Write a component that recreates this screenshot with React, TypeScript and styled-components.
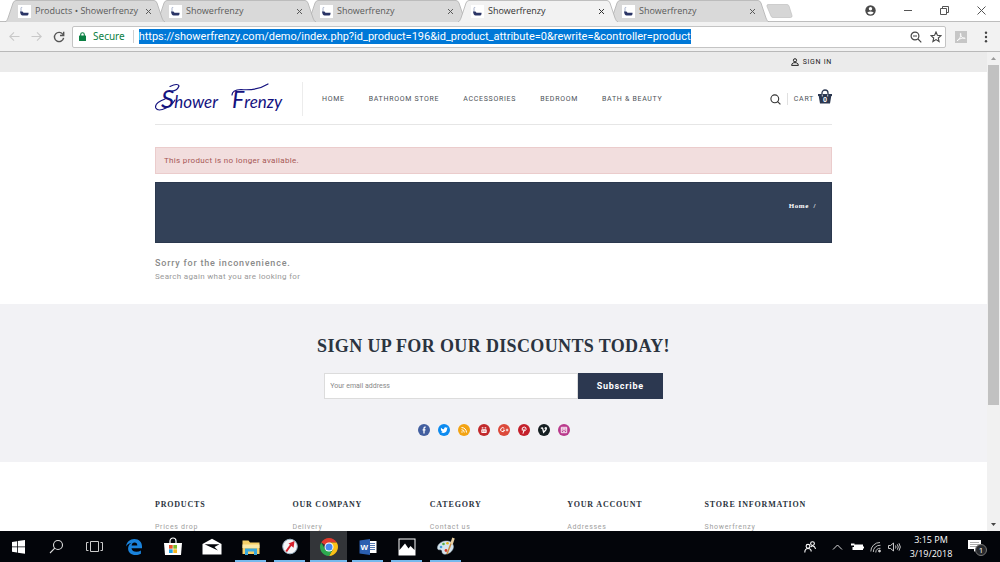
import React from "react";
import styled, { createGlobalStyle, css } from "styled-components";

const ui = `"Open Sans", "Noto Sans", sans-serif`;
const wideUi = `"Noto Sans", "Open Sans", sans-serif`;
const sans = `Roboto, "Liberation Sans", sans-serif`;
const serif = `"Liberation Serif", "Times New Roman", serif`;
const navy = "#2c3850";

const GlobalStyle = createGlobalStyle`
  *, *::before, *::after { box-sizing: border-box; }
  body { margin: 0; background: #fff; font-family: ${sans}; }
  h1, h2, h3, p, ul { margin: 0; padding: 0; }
  ul { list-style: none; }
  a { color: inherit; text-decoration: none; }
  button { border: 0; padding: 0; background: none; color: inherit; font: inherit; }
  svg { display: block; flex: none; }
`;

const Screen = styled.div`
  display: flex;
  flex-direction: column;
  height: 100vh;
  overflow: hidden;
`;

/* ---------- browser window ---------- */

const TabStrip = styled.div`
  display: flex;
  align-items: flex-end;
  height: 22px;
  flex: none;
  padding-left: 5px;
  background: #fff;
  border-bottom: 1px solid #bdbdbd;
`;

const TabList = styled.div`
  display: flex;
  flex: none;
`;

const Tab = styled.div<{ $active?: boolean; $order: number }>`
  position: relative;
  z-index: ${(p) => (p.$active ? 9 : p.$order)};
  display: flex;
  align-items: center;
  width: 151px;
  height: 22px;
  margin-bottom: -1px;
  padding: 0 4px 0 13px;
  color: ${(p) => (p.$active ? "#333" : "#5a5a5a")};
  font: 9px/22px ${ui};
`;

const TabShape = styled.svg`
  position: absolute;
  left: 0;
  top: 0;
  z-index: -1;
`;

const TabTitle = styled.span`
  flex: 1;
  margin-left: 4px;
  white-space: nowrap;
`;

const IconButton = styled.button`
  display: flex;
  align-items: center;
  justify-content: center;
  flex: none;
`;

const NewTab = styled(IconButton)`
  height: 20px;
  margin-left: 6px;
`;

const WindowControls = styled.div`
  display: flex;
  align-items: center;
  gap: 28px;
  height: 21px;
  margin-left: auto;
  padding-right: 14px;
  color: #555;
`;

const Toolbar = styled.div`
  display: flex;
  align-items: center;
  flex: none;
  height: 30px;
  padding: 0 12px 0 9px;
  background: #f2f2f2;
  border-bottom: 1px solid #b9b9b9;
`;

const NavButtons = styled.div`
  display: flex;
  gap: 11px;
  margin-right: 7px;
  color: #c9c9c9;
`;

const AddressBar = styled.div`
  display: flex;
  align-items: center;
  flex: 1;
  min-width: 0;
  height: 22px;
  padding: 0 3px 0 6px;
  background: #fff;
  border: 1px solid #c4c4c4;
  border-radius: 2px;
  font: 10px/15px ${wideUi};
`;

const Secure = styled.span`
  margin-left: 7px;
  padding-right: 8px;
  border-right: 1px solid #d0d0d0;
  color: #0b8043;
  line-height: 13px;
`;

const Url = styled.span`
  margin-left: 5px;
  background: #0078d7;
  color: #fff;
  font: 11px/15px ${sans};
  white-space: nowrap;
`;

const AddressActions = styled.div`
  display: flex;
  gap: 8px;
  margin-left: auto;
  color: #444;
`;

const Extensions = styled.div`
  display: flex;
  align-items: center;
  gap: 17px;
  margin-left: 9px;
`;

/* ---------- page ---------- */

const Viewport = styled.div`
  display: flex;
  flex: 1;
  min-height: 0;
  overflow: hidden;
`;

const Page = styled.div`
  flex: 1;
  min-width: 0;
  overflow: hidden;
`;

const ScrollTrack = styled.div`
  display: flex;
  flex-direction: column;
  align-items: center;
  width: 13px;
  flex: none;
  background: #f1f1f1;
`;

const ScrollThumb = styled.div`
  width: 11px;
  height: 71%;
  margin-bottom: auto;
  background: #c1c1c1;
`;

const Container = styled.div`
  max-width: 677px;
  margin: 0 auto;
`;

const TopBar = styled.div`
  background: #ebebeb;
`;

const TopBarInner = styled(Container)`
  display: flex;
  justify-content: flex-end;
  align-items: center;
  height: 20px;
`;

const SignIn = styled.a`
  display: flex;
  align-items: center;
  gap: 4px;
  color: #222;
  font-size: 7px;
  line-height: 18px;
  letter-spacing: 0.1em;
`;

const Header = styled(Container).attrs({ as: "header" })`
  display: flex;
  align-items: center;
  height: 53px;
  padding-top: 2px;
  border-bottom: 1px solid #e6e6e6;
`;

const Logo = styled.a`
  display: flex;
  align-items: center;
  width: 148px;
  height: 34px;
  border-right: 1px solid #ececec;
`;

const MainNav = styled.nav`
  display: flex;
  gap: 24px;
  margin-left: 19px;
  color: #4c5157;
  font-size: 7px;
  line-height: 12px;
  letter-spacing: 0.1em;
  white-space: nowrap;
`;

const HeaderTools = styled.div`
  display: flex;
  align-items: center;
  margin-left: auto;
  color: #4c5157;
  font-size: 7px;
  line-height: 12px;
  letter-spacing: 0.1em;
`;

const Cart = styled.a`
  display: flex;
  align-items: center;
  gap: 4px;
  margin-left: 6px;
  padding-left: 6px;
  border-left: 1px solid #e0e0e0;
`;

const Basket = styled.span`
  position: relative;
  display: block;
  margin-top: -5px;
`;

const BasketCount = styled.span`
  position: absolute;
  left: 0;
  right: 0;
  bottom: 0;
  color: #fff;
  font-size: 7px;
  font-weight: 700;
  line-height: 8px;
  letter-spacing: 0;
  text-align: center;
`;

const Alert = styled.div`
  margin-top: 22px;
  padding: 6px 8px;
  background: #f2dede;
  border: 1px solid #ebcccc;
  color: #a65755;
  font-size: 8px;
  line-height: 13px;
  letter-spacing: 0.04em;
`;

const Banner = styled.div`
  display: flex;
  justify-content: flex-end;
  height: 61px;
  margin-top: 8px;
  padding: 18px 15px;
  background: #334158;
  border: 1px solid #2b384e;
  color: #fff;
  font: bold 7px/10px ${serif};
  letter-spacing: 0.08em;
  white-space: pre;
`;

const Message = styled.section`
  padding: 13px 0 21px;
  color: #999;
`;

const MessageTitle = styled.h1`
  color: #8a8a8a;
  font-size: 9px;
  font-weight: 500;
  line-height: 15px;
  letter-spacing: 0.09em;
`;

const MessageText = styled.p`
  font-size: 8px;
  line-height: 12px;
  letter-spacing: 0.04em;
`;

const Newsletter = styled.section`
  padding: 30px 0 26px;
  background: #f2f2f5;
`;

const NewsletterTitle = styled.h2`
  color: #2b3440;
  font: bold 18px/24px ${serif};
  letter-spacing: 0.02em;
  text-align: center;
`;

const Form = styled.form`
  display: flex;
  width: 50%;
  height: 26px;
  margin: 15px auto 25px;
`;

const Email = styled.input`
  flex: 1;
  min-width: 0;
  padding: 0 5px;
  background: #fff;
  border: 1px solid #dcdcdc;
  border-radius: 0;
  color: #333;
  font: 7px/12px ${sans};
  &::placeholder { color: #888; }
`;

const Subscribe = styled.button`
  width: 85px;
  background: ${navy};
  color: #fff;
  font: 700 9px/12px ${sans};
  letter-spacing: 0.08em;
`;

const Socials = styled.ul`
  display: flex;
  justify-content: center;
  gap: 8px;
`;

const Social = styled.a<{ $color: string }>`
  display: flex;
  align-items: center;
  justify-content: center;
  width: 12px;
  height: 12px;
  border-radius: 50%;
  background: ${(p) => p.$color};
`;

const Footer = styled(Container).attrs({ as: "footer" })`
  display: grid;
  grid-template-columns: repeat(5, 1fr);
  gap: 10px;
  padding-top: 37px;
`;

const FooterTitle = styled.h3`
  color: #2b3440;
  font: bold 8px/12px ${serif};
  letter-spacing: 0.1em;
  white-space: nowrap;
`;

const FooterLink = styled.a`
  display: block;
  margin-top: 10px;
  color: #a0a0a0;
  font-size: 7px;
  line-height: 12px;
  letter-spacing: 0.1em;
`;

/* ---------- taskbar ---------- */

const Taskbar = styled.div`
  display: flex;
  flex: none;
  height: 31px;
  background: #03050a;
  color: #fff;
`;

const Apps = styled.div`
  display: flex;
`;

const AppButton = styled.button<{ $state?: "open" | "active" }>`
  display: flex;
  align-items: center;
  justify-content: center;
  width: 39px;
  height: 31px;
  border: solid transparent;
  border-width: 0 ${(p) => (p.$state === "active" ? 1 : 4)}px;
  background-clip: padding-box;
  &:first-child { width: 36px; }
  ${(p) => p.$state && css`
    background-image: linear-gradient(#76b9ed, #76b9ed);
    background-repeat: no-repeat;
    background-size: 100% 2px;
    background-position: 0 100%;
  `}
  ${(p) => p.$state === "active" && css`background-color: #333539;`}
`;

const Tray = styled.div`
  display: flex;
  align-items: center;
  margin-left: auto;
  padding-right: 13px;
  gap: 6px;
`;

const Clock = styled.div`
  width: 48px;
  font: 9px/14px ${ui};
  text-align: center;
  white-space: nowrap;
`;

const Notices = styled.button`
  position: relative;
  margin-left: 7px;
`;

const NoticeCount = styled.span`
  position: absolute;
  left: 7px;
  top: 5px;
  width: 12px;
  height: 12px;
  border: 1px solid #777;
  border-radius: 50%;
  background: #26282c;
  font: 8px/10px ${ui};
  text-align: center;
`;

/* ---------- drawings ---------- */

const Favicon = () => (
  <svg width="13" height="13" viewBox="0 0 13 13">
    <rect width="13" height="13" fill="#fff" />
    <path d="M3 7V3.2Q3 2 4.200 2.500" fill="none" stroke="#a9b4cc" strokeWidth="1" />
    <path d="M2 6.500h2.500l1 1.200h5v1.300q-.2 1.500-1.500 1.500H4.500Q2.500 10.500 2 6.500z" fill="#2b3566" />
  </svg>
);

const Close = () => (
  <svg width="7" height="7" viewBox="0 0 7 7" stroke="currentColor" strokeWidth="1">
    <path d="M1 1l5 5M6 1L1 6" />
  </svg>
);

const Back = ({ flip }: { flip?: boolean }) => (
  <svg width="11" height="11" viewBox="0 0 11 11" fill="none" stroke="currentColor" strokeWidth="1.1">
    <path d={flip ? "M.5 5.5h9.5M6 1.3l4.2 4.2L6 9.7" : "M10.5 5.5H1M5 1.3L.8 5.5 5 9.7"} />
  </svg>
);

const Reload = () => (
  <svg width="12" height="12" viewBox="0 0 12 12" fill="none" stroke="#555" strokeWidth="1.4">
    <path d="M10 3.6A4.6 4.6 0 1 0 10.6 6.8" />
    <path d="M10.7.8v3.7H7" />
  </svg>
);

const Lock = () => (
  <svg width="7" height="9" viewBox="0 0 7 9">
    <rect y="3.5" width="7" height="5.5" rx=".6" fill="#0b8043" />
    <path d="M1.7 4V2.5a1.8 1.8 0 0 1 3.6 0V4" fill="none" stroke="#0b8043" strokeWidth="1.1" />
  </svg>
);

const ZoomOut = () => (
  <svg width="12" height="12" viewBox="0 0 12 12" fill="none" stroke="currentColor" strokeWidth="1.2">
    <circle cx="5" cy="5" r="3.9" />
    <path d="M8 8l3.3 3.3M3 5h4" />
  </svg>
);

const Star = () => (
  <svg width="12" height="12" viewBox="0 0 12 12" fill="none" stroke="currentColor" strokeWidth="1.1">
    <path d="M6 1l1.4 3.3 3.6.3-2.7 2.4.8 3.5L6 8.6l-3.1 1.9.8-3.5L1 4.6l3.6-.3z" />
  </svg>
);

const Pdf = () => (
  <svg width="12" height="12" viewBox="0 0 12 12">
    <rect width="12" height="12" fill="#c6c6c6" />
    <path d="M2 9.8C4.5 8.5 6.4 4.5 5.8 2.4 5 2 5 4 6.6 5.8 8 7.4 9.6 7.8 10.2 7.3 9.8 6.4 5.5 6.9 2 9.8z" fill="none" stroke="#fff" strokeWidth=".9" />
  </svg>
);

const MenuDots = () => (
  <svg width="4" height="12" viewBox="0 0 4 12" fill="#444">
    <circle cx="2" cy="1.7" r="1.2" />
    <circle cx="2" cy="6" r="1.2" />
    <circle cx="2" cy="10.3" r="1.2" />
  </svg>
);

const Profile = () => (
  <svg width="11" height="11" viewBox="0 0 11 11">
    <circle cx="5.5" cy="5.5" r="5.2" fill="#4a4a4a" />
    <circle cx="5.5" cy="3.8" r="1.7" fill="#fff" />
    <path d="M2.3 7.6q3.2-2.2 6.4 0-1.2 1.9-3.2 1.9t-3.2-1.9z" fill="#fff" />
  </svg>
);

const Minimise = () => (
  <svg width="8" height="9" viewBox="0 0 8 9" stroke="currentColor"><path d="M0 4.5h8" /></svg>
);

const Restore = () => (
  <svg width="9" height="9" viewBox="0 0 9 9" fill="none" stroke="currentColor">
    <path d="M.5 2.5h6v6h-6zM2.5 2.5v-2h6v6h-2" />
  </svg>
);

const CloseWindow = () => (
  <svg width="9" height="9" viewBox="0 0 9 9" stroke="currentColor"><path d="M.5.5l8 8M8.5.5l-8 8" /></svg>
);

const User = () => (
  <svg width="8" height="8" viewBox="0 0 8 8" fill="none" stroke="#222" strokeWidth="1">
    <circle cx="4" cy="2.300" r="1.600" />
    <path d="M.6 7.400Q.6 5.300 2.800 4.700h2.400Q7.400 5.300 7.400 7.400z" />
  </svg>
);

const Wordmark = () => (
  <svg width="130" height="34" viewBox="0 0 130 34" role="img" aria-label="Shower Frenzy">
    <g fill="#14127f" fontFamily="Lato, sans-serif" fontStyle="italic" fontSize="17">
      <text x="6" y="26"><tspan fontSize="26">S</tspan>hower</text>
      <text x="77" y="26"><tspan fontSize="23">F</tspan>renzy</text>
    </g>
    <g fill="none" stroke="#14127f" strokeWidth="1.200" strokeLinecap="round">
      <path d="M10 17Q-1 21 .8 26 3 30 11 26 17 23 20 18" />
      <path d="M17 9Q22 9 24 4 23 .8 15 4.500" />
      <path d="M77 13Q77 8 86 7.500 102 9 113 2" />
    </g>
  </svg>
);

const Search = () => (
  <svg width="11" height="11" viewBox="0 0 11 11" fill="none" stroke="#333" strokeWidth="1.100">
    <circle cx="4.800" cy="4.800" r="3.900" />
    <path d="M7.600 7.600l2.800 2.800" />
  </svg>
);

const BasketShape = () => (
  <svg width="14" height="15" viewBox="0 0 14 15">
    <path d="M0 5h14v2h-.7L12 14.500H2L.7 7H0z" fill={navy} />
    <path d="M4 7.500V4a3 3 0 0 1 6 0v3.500" fill="none" stroke={navy} strokeWidth="1.300" />
    <path d="M4.300 5.500v2M9.700 5.500v2" stroke="#fff" strokeWidth=".8" />
  </svg>
);

const glyph = { width: 12, height: 12, viewBox: "0 0 12 12", fill: "none", stroke: "#fff" } as const;

const socials = [
  { name: "Facebook", color: "#435f9f", art: <path d="M7.700 3.200H7Q6 3.200 6 4.200V9.500M4.600 5.900h2.900" strokeWidth="1.300" /> },
  { name: "Twitter", color: "#0d8bf0", art: <path d="M2.800 8.300q1 .1 1.700-.5Q3.400 7.400 3.200 6.500 2.700 5 3 3.800q1.300 1.500 3 1.500-.1-1.900 1.500-2 .8 0 1.200.5l1-.2-.6 1Q9 8.700 5.500 9 4 9 2.800 8.300z" fill="#fff" stroke="none" /> },
  { name: "Rss", color: "#f3a312", art: <><path d="M3.500 3.500a5 5 0 0 1 5 5M3.500 5.700a2.800 2.800 0 0 1 2.800 2.800" /><circle cx="4" cy="8" r=".7" fill="#fff" stroke="none" /></> },
  { name: "YouTube", color: "#c22a2c", art: <><rect x="3.300" y="5.300" width="5.400" height="3.700" rx=".8" fill="#fff" stroke="none" /><path d="M4.300 3v1.700M6 3.300v1M7.700 3v1.700" strokeWidth=".9" /><path d="M4.900 6.300v1.800M6.900 6.300v1.800" stroke="#c22a2c" strokeWidth=".7" /></> },
  { name: "Google Plus", color: "#dc4a3b", art: <><path d="M6.300 4.500A2 2 0 1 0 6.600 6.200H5" /><path d="M7.800 6h2.600M9.100 4.700v2.600" strokeWidth=".9" /></> },
  { name: "Pinterest", color: "#c4202b", art: <path d="M4.300 6.600Q3.300 3 6.200 3 8.600 3.200 8 5.600 7.200 7.500 5.700 6.700M6.200 4.800L5 9.700" /> },
  { name: "Vimeo", color: "#161f22", art: <path d="M2.900 4.500Q4.400 3.300 4.700 4.600L5.600 8.200Q8.800 5.300 8.300 3.900 7.600 3.200 6.700 4.700" strokeWidth="1.300" /> },
  { name: "Instagram", color: "#b93a8c", art: <><path d="M3.300 3.300h5.400v5.400H3.300zM3.300 4.800h5.400" strokeWidth=".9" /><circle cx="6" cy="6.200" r="1.300" strokeWidth=".8" /></> },
];

const ScrollArrow = ({ down }: { down?: boolean }) => (
  <svg width="13" height="13" viewBox="0 0 13 13">
    <path d={down ? "M4 5h5L6.500 8z" : "M4 8h5L6.500 5z"} fill={down ? "#444" : "#999"} />
  </svg>
);

const icon = { width: 20, height: 20, viewBox: "0 0 20 20" } as const;

const apps: { name: string; state?: "open" | "active"; art: React.ReactNode }[] = [
  { name: "Start", art: <svg {...icon} fill="#fff"><path d="M4 5l5-.8v5.300H4zM9.800 4.100L17 3v6.500H9.800zM4 10.300h5v5.300l-5-.8zM9.800 10.300H17v6.500l-7.200-1.100z" /></svg> },
  { name: "Search", art: <svg {...icon} fill="none" stroke="#ddd" strokeWidth="1.100"><circle cx="12" cy="8" r="4.500" /><path d="M8.800 11.200L4 16" /></svg> },
  { name: "Task view", art: <svg {...icon} fill="none" stroke="#ccc"><path d="M5.500 4.500h8v10h-8zM3.500 5.500h-2v8h2M15.500 5.500h2v8h-2" /></svg> },
  { name: "Edge", art: <svg {...icon}><path d="M2 9.500C2.700 4.800 6 2 10.300 2c4.900 0 7.700 3.300 7.700 7.600v1.700H7.500c.3 2.500 2.300 3.500 4.900 3.500 1.700 0 3.200-.4 4.500-1.200v3.200c-1.600.9-3.300 1.300-5.300 1.300-4.500 0-7.500-2.500-7.500-6.500 0-2.600 1.400-4.700 3.600-5.800C5.300 6.200 3.300 7.400 2 9.500zM7.600 8.500h5.700c0-2-.9-3.100-2.700-3.100-1.700 0-2.700 1.200-3 3.100z" fill="#1a83dc" /></svg> },
  { name: "Store", art: <svg {...icon}><path d="M1 6h18l-1 12H2z" fill="#fff" /><path d="M7 6V4a3 3 0 0 1 6 0v2" fill="none" stroke="#fff" strokeWidth="1.200" /><path d="M6 8h3.700v3.700H6z" fill="#e8502a" /><path d="M10.300 8H14v3.700h-3.700z" fill="#7db928" /><path d="M6 12.300h3.700V16H6z" fill="#21a3e4" /><path d="M10.300 12.300H14V16h-3.700z" fill="#f6b61e" /></svg> },
  { name: "Mail", art: <svg {...icon}><path d="M.5 7L10 1.800 19.500 7v10.500H.5z" fill="#fff" /><path d="M2.500 7.300h15L12.500 10l3.500 3.600z" fill="#03050a" /></svg> },
  { name: "File Explorer", state: "open", art: <svg {...icon}><path d="M1.500 3.500h6l1.500 2h9.500V17h-17z" fill="#f5cf68" /><path d="M1.500 7.500h17V11h-17z" fill="#fce9a6" /><path d="M4 18v-6.500h12V18h-3v-3.500H7V18z" fill="#3aa9dd" /></svg> },
  { name: "Compass", state: "open", art: <svg {...icon}><circle cx="10" cy="9.500" r="7.300" fill="#f4f6f8" stroke="#9db3c4" /><path d="M6.200 14.500l5-7" stroke="#d5202b" strokeWidth="2" /><path d="M8.500 6.500L14.500 4l-.9 6.700z" fill="#d5202b" /></svg> },
  { name: "Chrome", state: "active", art: <svg {...icon}><path d="M10 10L2.210 5.500A9 9 0 0 1 17.790 5.500L10 5.500z" fill="#e33b2e" /><path d="M10 5.500h7.790A9 9 0 0 1 10 19l3.900-6.750z" fill="#fbc116" /><path d="M2.210 5.500A9 9 0 0 0 10 19l3.900-6.750H6.100z" fill="#2da94f" /><circle cx="10" cy="10" r="4.500" fill="#fff" /><circle cx="10" cy="10" r="3.500" fill="#4688f1" /></svg> },
  { name: "Word", state: "open", art: <svg {...icon}><path d="M10 4h8.500v12H10z" fill="#fff" /><path d="M12 6.500h5M12 8.500h5M12 10.500h5M12 12.500h5" stroke="#2b579a" strokeWidth=".8" /><path d="M1.500 3.500L12 2v16L1.500 16.500z" fill="#2b5fb0" /><text x="2.500" y="13" fill="#fff" fontFamily="Liberation Sans, sans-serif" fontWeight="700" fontSize="8">W</text></svg> },
  { name: "Photos", state: "open", art: <svg {...icon}><path d="M1.500 1.500h17v17h-17z" fill="#fff" /><path d="M2.500 2.500h15V13l-4-4-2 2.500-3.500-5L2.500 13z" fill="#03050a" /></svg> },
  { name: "Paint", state: "open", art: <svg {...icon}><path d="M9.500 4C4.500 4.500 1 8 1.500 11.500c.5 2 2.500 1 3.700 1.500 1.600.8-.2 3 2.500 4 4 1 9.800-2.500 9.800-7.500C17 5.500 13.500 3.700 9.500 4z" fill="#d5e4ed" stroke="#a5b8c4" strokeWidth=".5" /><circle cx="5" cy="10" r="1.300" fill="#3e9cdc" /><circle cx="7.500" cy="7" r="1.300" fill="#56b04b" /><circle cx="11.500" cy="6.300" r="1.300" fill="#e3b51d" /><circle cx="10" cy="13.500" r="1.400" fill="#d33b2c" /><path d="M16 4L11 17" stroke="#c98a42" strokeWidth="1.500" /><path d="M17.500 1l-2 6" stroke="#e9cfa0" strokeWidth="2.600" /></svg> },
];

const tabs = ["Products • Showerfrenzy", "Showerfrenzy", "Showerfrenzy", "Showerfrenzy", "Showerfrenzy"];
const nav = ["HOME", "BATHROOM STORE", "ACCESSORIES", "BEDROOM", "BATH & BEAUTY"];
const columns = [
  ["PRODUCTS", "Prices drop"],
  ["OUR COMPANY", "Delivery"],
  ["CATEGORY", "Contact us"],
  ["YOUR ACCOUNT", "Addresses"],
  ["STORE INFORMATION", "Showerfrenzy"],
];

export default function App() {
  return (
    <Screen>
      <GlobalStyle />
      <TabStrip>
        <TabList>
          {tabs.map((title, i) => (
            <Tab key={i} $active={i === 3} $order={tabs.length - i}>
              <TabShape width="160" height="22" viewBox="0 0 160 22">
                <path
                  d="M0 22C2 21 2 20 3 18L8 3Q9 .5 11 .5H149Q151 .5 152 3L157 18C158 20 158 21 160 22"
                  fill={i === 3 ? "#f2f2f2" : "#d9d9d9"}
                  stroke="#b0b0b0"
                  strokeWidth=".8"
                />
              </TabShape>
              <Favicon />
              <TabTitle>{title}</TabTitle>
              <IconButton aria-label="Close tab"><Close /></IconButton>
            </Tab>
          ))}
        </TabList>
        <NewTab aria-label="New tab">
          <svg width="27" height="14" viewBox="0 0 27 14">
            <path d="M2 .5h19q1.500 0 2 1.500l3 9.500q.5 2-1.500 2H7q-1.500 0-2-1.500L1 2.500q-.5-2 1-2z" fill="#d6d6d6" stroke="#c0c0c0" strokeWidth=".7" />
          </svg>
        </NewTab>
        <WindowControls>
          <IconButton aria-label="Profile"><Profile /></IconButton>
          <IconButton aria-label="Minimise"><Minimise /></IconButton>
          <IconButton aria-label="Restore"><Restore /></IconButton>
          <IconButton aria-label="Close"><CloseWindow /></IconButton>
        </WindowControls>
      </TabStrip>
      <Toolbar>
        <NavButtons>
          <IconButton aria-label="Back"><Back /></IconButton>
          <IconButton aria-label="Forward"><Back flip /></IconButton>
          <IconButton aria-label="Reload"><Reload /></IconButton>
        </NavButtons>
        <AddressBar>
          <Lock />
          <Secure>Secure</Secure>
          <Url>https://showerfrenzy.com/demo/index.php?id_product=196&amp;id_product_attribute=0&amp;rewrite=&amp;controller=product</Url>
          <AddressActions>
            <IconButton aria-label="Zoom"><ZoomOut /></IconButton>
            <IconButton aria-label="Bookmark"><Star /></IconButton>
          </AddressActions>
        </AddressBar>
        <Extensions>
          <IconButton aria-label="PDF"><Pdf /></IconButton>
          <IconButton aria-label="Menu"><MenuDots /></IconButton>
        </Extensions>
      </Toolbar>

      <Viewport>
        <Page>
          <TopBar>
            <TopBarInner>
              <SignIn href="#"><User />SIGN IN</SignIn>
            </TopBarInner>
          </TopBar>
          <Header>
            <Logo href="#"><Wordmark /></Logo>
            <MainNav>{nav.map((n) => <a key={n} href="#">{n}</a>)}</MainNav>
            <HeaderTools>
              <IconButton aria-label="Search"><Search /></IconButton>
              <Cart href="#">
                CART
                <Basket><BasketShape /><BasketCount>0</BasketCount></Basket>
              </Cart>
            </HeaderTools>
          </Header>
          <Container>
            <Alert role="alert">This product is no longer available.</Alert>
            <Banner><a href="#">Home</a>{"  /"}</Banner>
            <Message>
              <MessageTitle>Sorry for the inconvenience.</MessageTitle>
              <MessageText>Search again what you are looking for</MessageText>
            </Message>
          </Container>
          <Newsletter>
            <Container>
              <NewsletterTitle>SIGN UP FOR OUR DISCOUNTS TODAY!</NewsletterTitle>
              <Form onSubmit={(e) => e.preventDefault()}>
                <Email type="email" aria-label="Your email address" placeholder="Your email address" />
                <Subscribe type="submit">Subscribe</Subscribe>
              </Form>
              <Socials>
                {socials.map((s) => (
                  <li key={s.name}>
                    <Social href="#" $color={s.color} aria-label={s.name}><svg {...glyph}>{s.art}</svg></Social>
                  </li>
                ))}
              </Socials>
            </Container>
          </Newsletter>
          <Footer>
            {columns.map(([title, link]) => (
              <div key={title}>
                <FooterTitle>{title}</FooterTitle>
                <FooterLink href="#">{link}</FooterLink>
              </div>
            ))}
          </Footer>
        </Page>
        <ScrollTrack>
          <ScrollArrow />
          <ScrollThumb />
          <ScrollArrow down />
        </ScrollTrack>
      </Viewport>

      <Taskbar>
        <Apps>
          {apps.map((a) => (
            <AppButton key={a.name} $state={a.state} aria-label={a.name}>{a.art}</AppButton>
          ))}
        </Apps>
        <Tray>
          <svg width="12" height="12" viewBox="0 0 12 12" fill="none" stroke="#fff" strokeWidth="1.100">
            <circle cx="4" cy="5.300" r="1.900" /><path d="M.8 11.500q0-4 3.200-4t3.200 3" />
            <circle cx="8.500" cy="2.600" r="1.900" /><path d="M6.600 6q2-2 4 0 .8 1 .8 2" />
          </svg>
          <svg width="23" height="12" viewBox="0 0 23 12" fill="none" stroke="#ddd"><path d="M11 8.500l4.500-4.500L20 8.500" /></svg>
          <svg width="13" height="12" viewBox="0 0 13 12"><path d="M3 3.500h9V9H1.500V6H3z" fill="#fff" /><path d="M12 5.500h1v2h-1zM0 2.500h3.500v2H0z" fill="#fff" /></svg>
          <svg width="12" height="12" viewBox="0 0 12 12" fill="none" stroke="#bbb"><path d="M.8 10.500A9 9 0 0 1 10 1.500M3.300 11A6.500 6.500 0 0 1 10.500 4.300M5.800 11.500A4 4 0 0 1 10.500 7.300" /><circle cx="9.500" cy="10" r="1" fill="#fff" /></svg>
          <svg width="13" height="12" viewBox="0 0 13 12" fill="none" stroke="#ddd" strokeWidth=".9"><path d="M.5 4.500h2L5.500 2v8l-3-2.500h-2zM7.500 4.500q1 1.500 0 3M9.300 3.300q2 2.700 0 5.400M11 2.300q2.700 3.700 0 7.400" /></svg>
          <Clock>3:15 PM<br />3/19/2018</Clock>
          <Notices aria-label="Notifications">
            <svg width="19" height="16" viewBox="0 0 19 16"><path d="M0 1h13v9H8.500L6 13v-3H0z" fill="#fff" /><path d="M2 3.500h9M2 5.500h9M2 7.500h9" stroke="#888" strokeWidth=".7" /></svg>
            <NoticeCount>1</NoticeCount>
          </Notices>
        </Tray>
      </Taskbar>
    </Screen>
  );
}
